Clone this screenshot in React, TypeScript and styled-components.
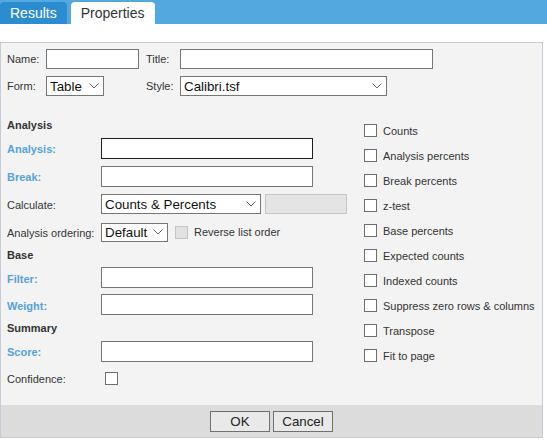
import React from "react";
import styled, { createGlobalStyle } from "styled-components";

const Global = createGlobalStyle`
  html, body { margin: 0; padding: 0; background: #fff; }
  body { font-family: "Liberation Sans", Arial, sans-serif; color: #333; }
  * { box-sizing: border-box; }
`;

const Page = styled.div`
  width: 547px;
  height: 440px;
  display: flex;
  flex-direction: column;
`;

const TabBar = styled.div`
  height: 24px;
  background: #52a8df;
  display: flex;
  align-items: flex-end;
  gap: 4px;
`;

const Tab = styled.div<{ $active?: boolean }>`
  height: 22px;
  padding: 0 10px;
  border-radius: 4px 4px 0 0;
  font-size: 14px;
  line-height: 23px;
  background: ${(p) => (p.$active ? "#ffffff" : "#2b8dd0")};
  color: ${(p) => (p.$active ? "#333" : "#fff")};
`;

const Panel = styled.div`
  margin-top: 18px;
  width: 543px;
  height: 396px;
  border: 1px solid #c6ccd6;
  background: #f3f3f3;
  display: flex;
  flex-direction: column;
`;

const Body = styled.div`
  flex: 1;
  padding: 6px 6px 0 6px;
`;

const TopGrid = styled.div`
  display: grid;
  grid-template-columns: 39px 100px 34px auto;
  row-gap: 7px;
  align-items: center;
`;

const Label = styled.span<{ $blue?: boolean }>`
  font-size: 11px;
  font-weight: ${(p) => (p.$blue ? "bold" : "normal")};
  color: ${(p) => (p.$blue ? "#57a2da" : "#333")};
`;

const TextInput = styled.input<{ $w: number; $h?: number; $focus?: boolean }>`
  width: ${(p) => p.$w}px;
  height: ${(p) => p.$h ?? 20}px;
  border: 1px solid ${(p) => (p.$focus ? "#1e1e1e" : "#767676")};
  background: #fff;
  margin: 0;
  padding: 0 3px;
  font-family: inherit;
  font-size: 13.33px;
  outline: none;
`;

const SelectWrap = styled.div<{ $w: number; $h?: number }>`
  position: relative;
  width: ${(p) => p.$w}px;
  height: ${(p) => p.$h ?? 20}px;
`;

const NativeSelect = styled.select`
  appearance: none;
  -webkit-appearance: none;
  width: 100%;
  height: 100%;
  margin: 0;
  border: 1px solid #767676;
  border-radius: 0;
  background: #fff;
  padding: 0 0 0 3px;
  font-family: "Liberation Sans", Arial, sans-serif;
  font-size: 13.33px;
  color: #111;
  outline: none;
`;

const Chevron = styled.svg`
  position: absolute;
  right: 5px;
  top: 50%;
  margin-top: -3px;
  pointer-events: none;
`;

const Select: React.FC<{ w: number; h?: number; value: string }> = ({ w, h, value }) => (
  <SelectWrap $w={w} $h={h}>
    <NativeSelect defaultValue={value}>
      <option>{value}</option>
    </NativeSelect>
    <Chevron width="10" height="6" viewBox="0 0 10 6">
      <path d="M0.5 0.5 L5 5 L9.5 0.5" stroke="#6a6a6a" strokeWidth="1" fill="none" />
    </Chevron>
  </SelectWrap>
);

const Sections = styled.div`
  margin-top: 20px;
  display: flex;
`;

const LeftCol = styled.div`
  width: 357px;
  display: flex;
  flex-direction: column;
`;

const RightCol = styled.div`
  padding-top: 2px;
  display: flex;
  flex-direction: column;
`;

const Heading = styled.div<{ $h?: number }>`
  height: ${(p) => p.$h ?? 18}px;
  display: flex;
  align-items: center;
  font-size: 11px;
  font-weight: bold;
  color: #333;
`;

const FieldRow = styled.div<{ $h?: number }>`
  height: ${(p) => p.$h ?? 28}px;
  display: flex;
  align-items: center;
`;

const FieldLabel = styled.div`
  width: 94px;
  flex: none;
`;

const Controls = styled.div`
  display: flex;
  align-items: center;
  gap: 4px;
`;

const GreyBox = styled.div`
  width: 82px;
  height: 20px;
  background: #e4e4e4;
  border: 1px solid #c6c6c6;
`;

const Box = styled.span<{ $disabled?: boolean }>`
  width: 13px;
  height: 13px;
  flex: none;
  background: ${(p) => (p.$disabled ? "#e2e2e2" : "#fff")};
  border: 1px solid ${(p) => (p.$disabled ? "#c4c4c4" : "#6e6e6e")};
`;

const CheckLine = styled.label<{ $h?: number; $inset?: number }>`
  height: ${(p) => p.$h ?? 25}px;
  margin-left: ${(p) => p.$inset ?? 0}px;
  display: flex;
  align-items: center;
  gap: 6px;
  font-size: 11px;
  color: #333;
`;

const Footer = styled.div`
  height: 32px;
  background: #dcdcdc;
  display: flex;
  justify-content: center;
  align-items: flex-start;
  padding-top: 6px;
  gap: 3px;
`;

const Button = styled.button`
  width: 60px;
  height: 21px;
  margin: 0;
  padding: 0;
  border: 1px solid #707070;
  border-radius: 0;
  background: #e9e9e9;
  font-family: "Liberation Sans", Arial, sans-serif;
  font-size: 13.33px;
  color: #222;
`;

const options = [
  "Counts",
  "Analysis percents",
  "Break percents",
  "z-test",
  "Base percents",
  "Expected counts",
  "Indexed counts",
  "Suppress zero rows & columns",
  "Transpose",
  "Fit to page",
];

export default function App() {
  return (
    <Page>
      <Global />
      <TabBar>
        <Tab>Results</Tab>
        <Tab $active>Properties</Tab>
      </TabBar>
      <Panel>
        <Body>
          <TopGrid>
            <Label>Name:</Label>
            <TextInput $w={93} />
            <Label>Title:</Label>
            <TextInput $w={253} />
            <Label>Form:</Label>
            <Select w={58} value="Table" />
            <Label>Style:</Label>
            <Select w={207} value="Calibri.tsf" />
          </TopGrid>
          <Sections>
            <LeftCol>
              <Heading>Analysis</Heading>
              <FieldRow>
                <FieldLabel><Label $blue>Analysis:</Label></FieldLabel>
                <TextInput $w={212} $h={21} $focus />
              </FieldRow>
              <FieldRow>
                <FieldLabel><Label $blue>Break:</Label></FieldLabel>
                <TextInput $w={212} $h={21} />
              </FieldRow>
              <FieldRow>
                <FieldLabel><Label>Calculate:</Label></FieldLabel>
                <Controls>
                  <Select w={160} value="Counts & Percents" />
                  <GreyBox />
                </Controls>
              </FieldRow>
              <FieldRow>
                <FieldLabel><Label>Analysis ordering:</Label></FieldLabel>
                <Controls>
                  <Select w={67} h={19} value="Default" />
                  <CheckLine $inset={3}>
                    <Box $disabled />
                    Reverse list order
                  </CheckLine>
                </Controls>
              </FieldRow>
              <Heading>Base</Heading>
              <FieldRow $h={27}>
                <FieldLabel><Label $blue>Filter:</Label></FieldLabel>
                <TextInput $w={212} $h={21} />
              </FieldRow>
              <FieldRow $h={27}>
                <FieldLabel><Label $blue>Weight:</Label></FieldLabel>
                <TextInput $w={212} $h={21} />
              </FieldRow>
              <Heading $h={19}>Summary</Heading>
              <FieldRow>
                <FieldLabel><Label $blue>Score:</Label></FieldLabel>
                <TextInput $w={212} $h={21} />
              </FieldRow>
              <FieldRow $h={26}>
                <FieldLabel><Label>Confidence:</Label></FieldLabel>
                <CheckLine $inset={4}>
                  <Box />
                </CheckLine>
              </FieldRow>
            </LeftCol>
            <RightCol>
              {options.map((o) => (
                <CheckLine key={o}>
                  <Box />
                  {o}
                </CheckLine>
              ))}
            </RightCol>
          </Sections>
        </Body>
        <Footer>
          <Button>OK</Button>
          <Button>Cancel</Button>
        </Footer>
      </Panel>
    </Page>
  );
}
